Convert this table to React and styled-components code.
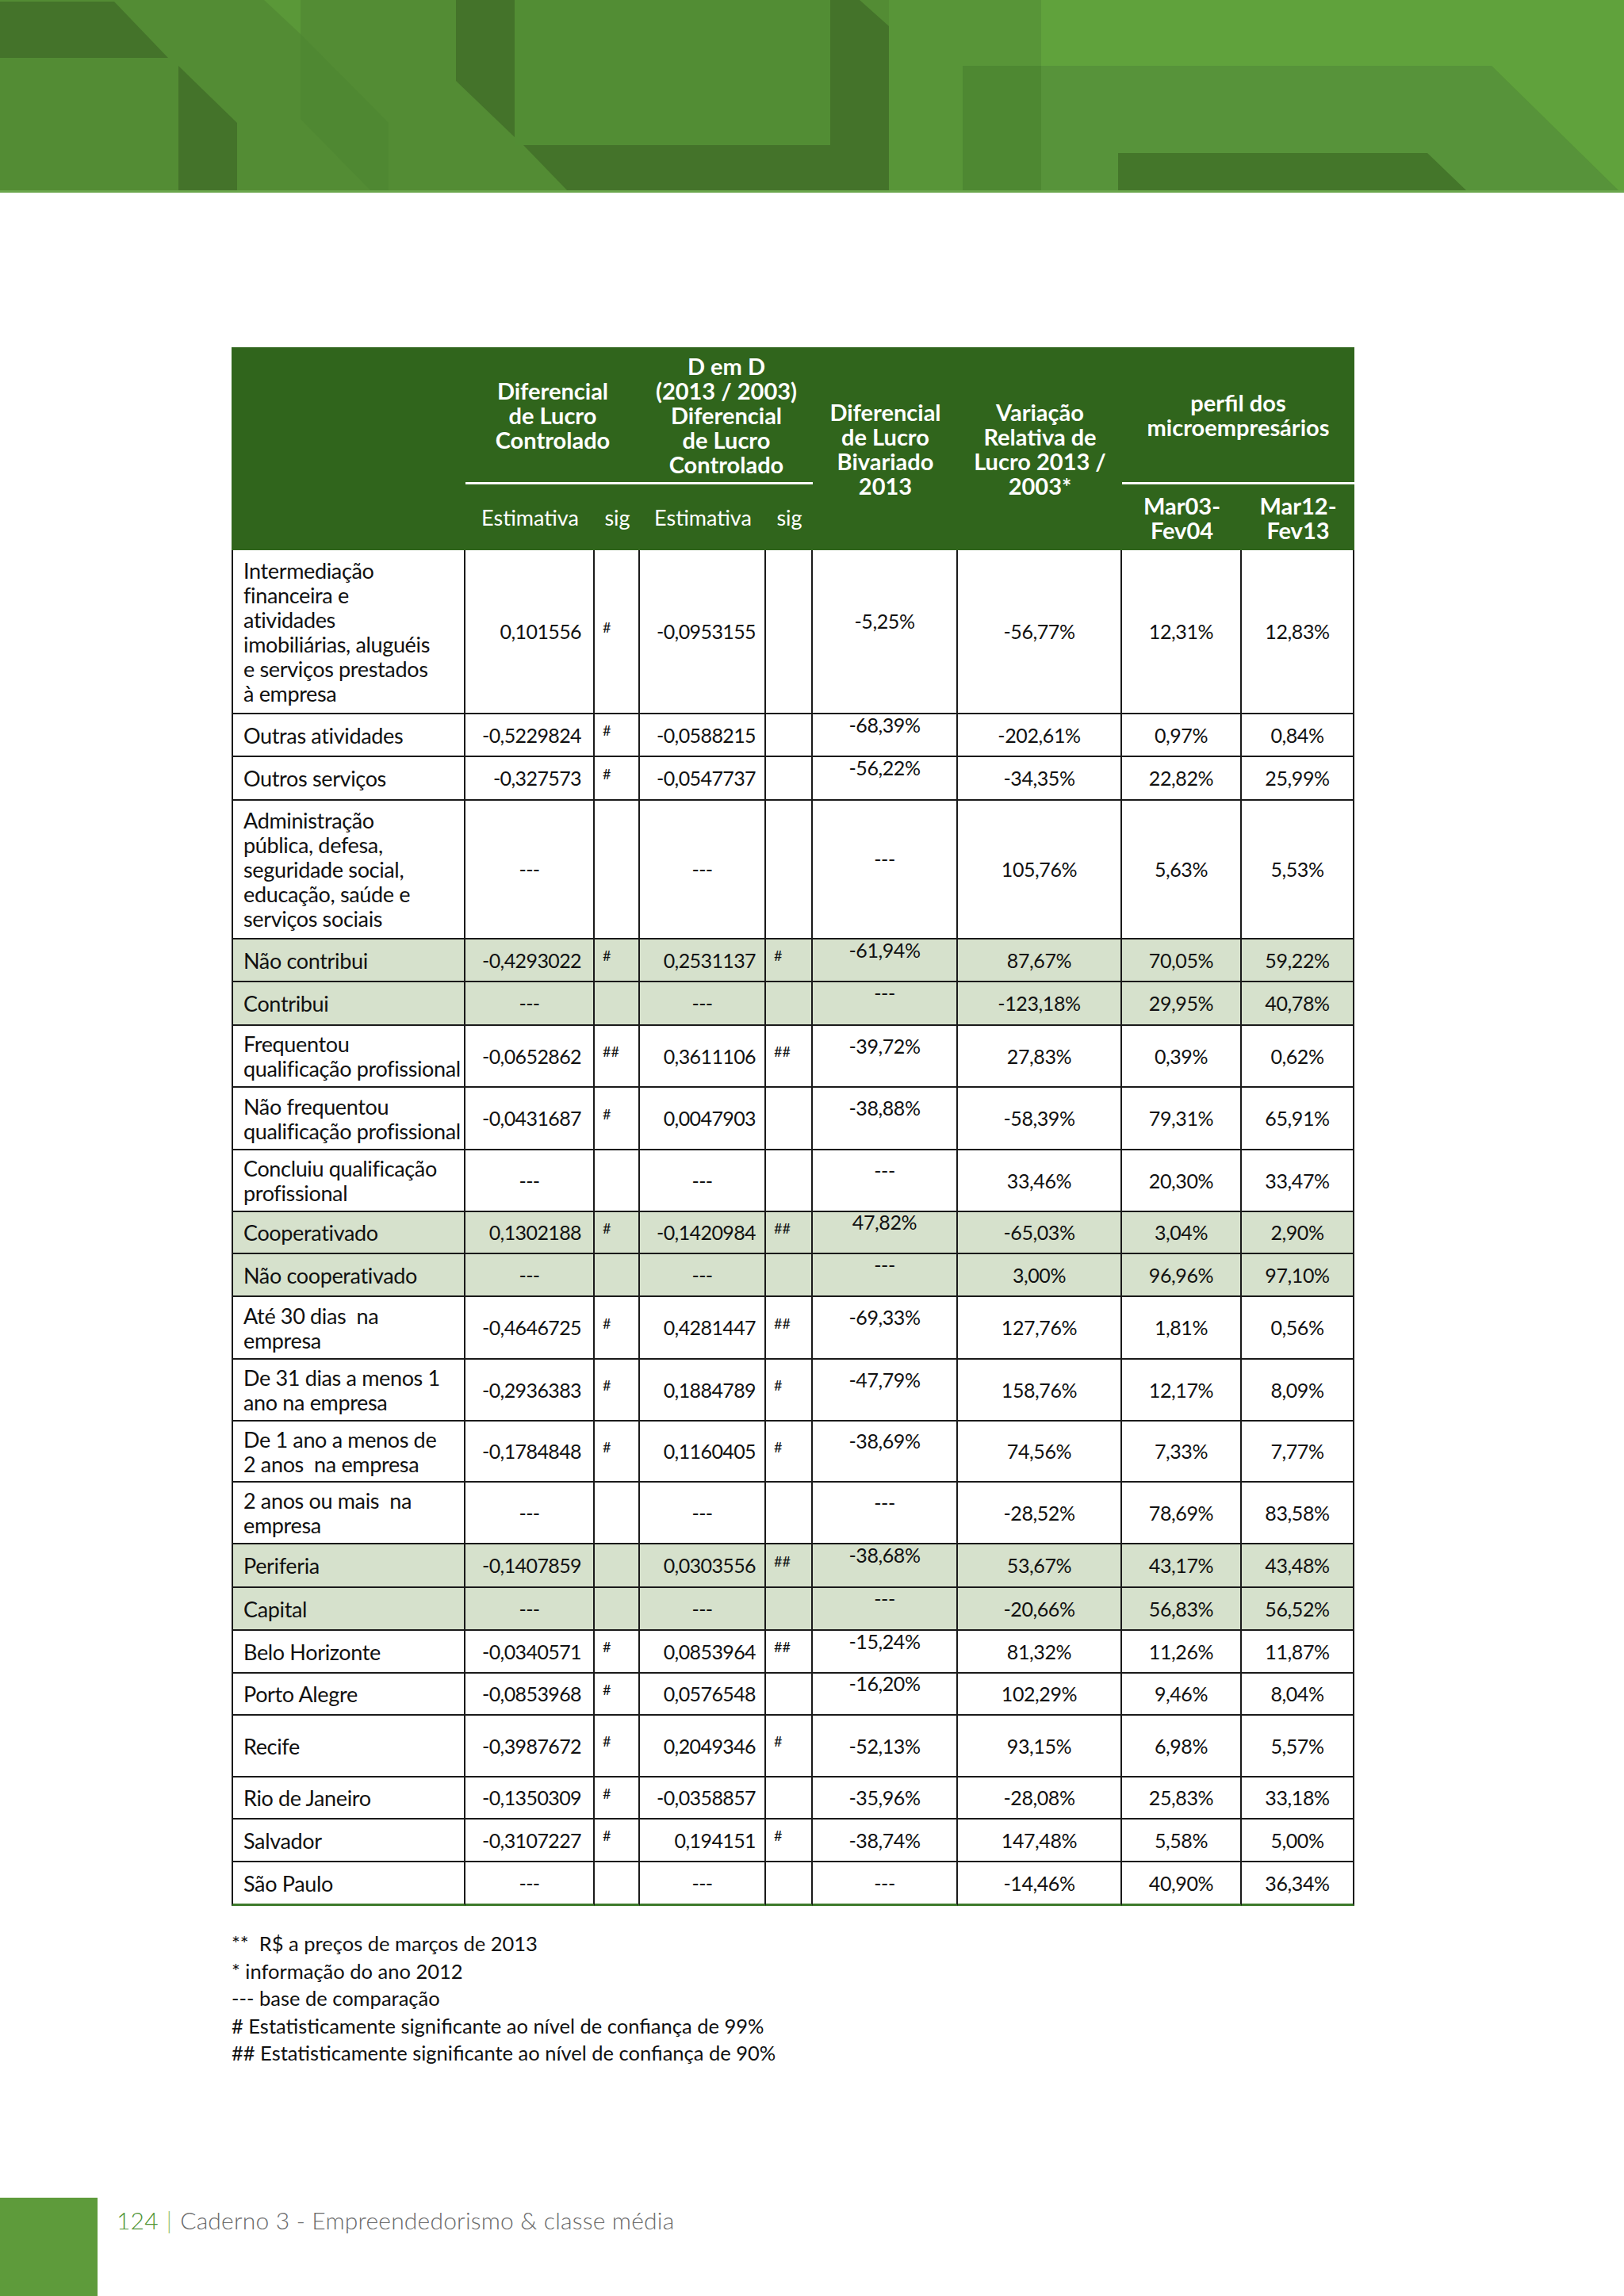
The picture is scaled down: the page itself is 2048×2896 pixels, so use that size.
import React from 'react';
import styled, {createGlobalStyle} from 'styled-components';

const GlobalStyle = createGlobalStyle`
  html, body {
    margin: 0;
    padding: 0;
    background: #ffffff;
  }
  body {
    font-family: Lato, "Open Sans", "DejaVu Sans", sans-serif;
    color: #111111;
  }
`;

const GREEN_DARK = '#30651c';
const SHADE = '#d6e1cc';

const Page = styled.div`
  width: 2048px;
  height: 2896px;
  display: flex;
  flex-direction: column;
  overflow: hidden;
`;

const Banner = styled.div`
  height: 243px;
  flex-shrink: 0;
  svg {
    display: block;
    width: 100%;
    height: 100%;
  }
`;

const Content = styled.div`
  padding: 195px 0 0 292px;
`;

const Table = styled.table`
  width: 1416px;
  table-layout: fixed;
  border-collapse: separate;
  border-spacing: 0;
  font-size: 27px;
  line-height: 31px;
`;

const HeadRow = styled.tr`
  height: ${p => p.$h}px;
`;

const HeadCell = styled.th`
  background: ${GREEN_DARK};
  color: #ffffff;
  font-weight: ${p => (p.$light ? 400 : 700)};
  font-size: ${p => (p.$light ? 27 : 29)}px;
  line-height: 31px;
  text-align: center;
  vertical-align: middle;
  padding: 0 4px;
  border-bottom: ${p => (p.$line ? '3px solid #ffffff' : 'none')};
  white-space: nowrap;
`;

const Row = styled.tr`
  height: ${p => p.$h}px;
  background: ${p => (p.$shade ? SHADE : '#ffffff')};
`;

const Cell = styled.td`
  border-right: 2px solid #1a1a1a;
  border-bottom: ${p => (p.$last ? '3px solid #3d7a2b' : '2px solid #1a1a1a')};
  vertical-align: middle;
  padding: 0;
  white-space: nowrap;
`;

const LabelCell = styled(Cell)`
  border-left: 2px solid #1a1a1a;
  padding: 0 0 0 13px;
  text-align: left;
  letter-spacing: -0.35px;
`;

const NumCell = styled(Cell)`
  font-size: 25px;
  letter-spacing: -0.6px;
  text-align: ${p => (p.$dash ? 'center' : 'right')};
  padding-right: ${p => (p.$dash ? 0 : p.$pr)}px;
`;

const SigCell = styled(Cell)`
  text-align: left;
  padding: 0 0 12px 10px;
  font-size: 18px;
  line-height: 18px;
`;

const CenterCell = styled(Cell)`
  font-size: 25px;
  letter-spacing: -0.4px;
  text-align: center;
`;

const Lifted = styled.span`
  display: inline-block;
  transform: translateY(${p => (p.$on ? -13 : 0)}px);
`;

const Notes = styled.div`
  margin-top: 30px;
  font-size: 25.5px;
  line-height: 34.6px;
`;

const Footer = styled.footer`
  margin-top: auto;
  height: 124px;
  display: flex;
  align-items: flex-start;
  gap: 24px;
`;

const FooterBlock = styled.div`
  width: 123px;
  height: 100%;
  background: #5e9b3b;
`;

const FooterText = styled.div`
  padding-top: 10px;
  font-family: Lato, "Open Sans", sans-serif;
  font-weight: 300;
  font-size: 30px;
  letter-spacing: 0.2px;
  color: #6a6a6a;
`;

const PageNum = styled.span`
  color: #4f9434;
`;

const Bar = styled.span`
  color: #8bbd6e;
  margin: 0 10px 0 10px;
`;

const rows = [
  ['Intermediação\nfinanceira e\natividades\nimobiliárias, aluguéis\ne serviços prestados\nà empresa', '0,101556', '#', '-0,0953155', '', '-5,25%', '-56,77%', '12,31%', '12,83%', 207, false, true],
  ['Outras atividades', '-0,5229824', '#', '-0,0588215', '', '-68,39%', '-202,61%', '0,97%', '0,84%', 54, false, true],
  ['Outros serviços', '-0,327573', '#', '-0,0547737', '', '-56,22%', '-34,35%', '22,82%', '25,99%', 55, false, true],
  ['Administração\npública, defesa,\nseguridade social,\neducação, saúde e\nserviços sociais', '---', '', '---', '', '---', '105,76%', '5,63%', '5,53%', 175, false, true],
  ['Não contribui', '-0,4293022', '#', '0,2531137', '#', '-61,94%', '87,67%', '70,05%', '59,22%', 54, true, true],
  ['Contribui', '---', '', '---', '', '---', '-123,18%', '29,95%', '40,78%', 55, true, true],
  ['Frequentou\nqualificação profissional', '-0,0652862', '##', '0,3611106', '##', '-39,72%', '27,83%', '0,39%', '0,62%', 78, false, true],
  ['Não frequentou\nqualificação profissional', '-0,0431687', '#', '0,0047903', '', '-38,88%', '-58,39%', '79,31%', '65,91%', 79, false, true],
  ['Concluiu qualificação\nprofissional', '---', '', '---', '', '---', '33,46%', '20,30%', '33,47%', 78, false, true],
  ['Cooperativado', '0,1302188', '#', '-0,1420984', '##', '47,82%', '-65,03%', '3,04%', '2,90%', 53, true, true],
  ['Não cooperativado', '---', '', '---', '', '---', '3,00%', '96,96%', '97,10%', 54, true, true],
  ['Até 30 dias  na\nempresa', '-0,4646725', '#', '0,4281447', '##', '-69,33%', '127,76%', '1,81%', '0,56%', 79, false, true],
  ['De 31 dias a menos 1\nano na empresa', '-0,2936383', '#', '0,1884789', '#', '-47,79%', '158,76%', '12,17%', '8,09%', 78, false, true],
  ['De 1 ano a menos de\n2 anos  na empresa', '-0,1784848', '#', '0,1160405', '#', '-38,69%', '74,56%', '7,33%', '7,77%', 77, false, true],
  ['2 anos ou mais  na\nempresa', '---', '', '---', '', '---', '-28,52%', '78,69%', '83,58%', 78, false, true],
  ['Periferia', '-0,1407859', '', '0,0303556', '##', '-38,68%', '53,67%', '43,17%', '43,48%', 55, true, true],
  ['Capital', '---', '', '---', '', '---', '-20,66%', '56,83%', '56,52%', 54, true, true],
  ['Belo Horizonte', '-0,0340571', '#', '0,0853964', '##', '-15,24%', '81,32%', '11,26%', '11,87%', 54, false, true],
  ['Porto Alegre', '-0,0853968', '#', '0,0576548', '', '-16,20%', '102,29%', '9,46%', '8,04%', 53, false, true],
  ['Recife', '-0,3987672', '#', '0,2049346', '#', '-52,13%', '93,15%', '6,98%', '5,57%', 78, false, false],
  ['Rio de Janeiro', '-0,1350309', '#', '-0,0358857', '', '-35,96%', '-28,08%', '25,83%', '33,18%', 53, false, false],
  ['Salvador', '-0,3107227', '#', '0,194151', '#', '-38,74%', '147,48%', '5,58%', '5,00%', 54, false, false],
  ['São Paulo', '---', '', '---', '', '---', '-14,46%', '40,90%', '36,34%', 55, false, false],
];

const colWidths = [295, 163, 57, 159, 59, 183, 207, 151, 142];

function Lines({text}) {
  const parts = text.split('\n');
  return parts.map((p, i) => (
    <React.Fragment key={i}>
      {p.replace(/  /g, '\u00a0 ')}
      {i < parts.length - 1 && <br />}
    </React.Fragment>
  ));
}

function BannerArt() {
  return (
    <svg viewBox="0 0 2048 243" preserveAspectRatio="none">
      <rect x="0" y="0" width="2048" height="243" fill="#538c34" />
      <polygon points="333,0 379,0 379,43 333,0" fill="#5a9838" />
      <polygon points="1121,0 1313,0 1313,243 1121,243" fill="#589538" />
      <polygon points="1214,83 1313,83 1313,243 1214,243" fill="#4e8832" />
      <polygon points="1313,83 1881,83 2044,243 1313,243" fill="#57933a" />
      <polygon points="1313,0 2048,0 2048,243 2044,243 1881,83 1313,83" fill="#60a23c" />
      <polygon points="0,2 144,2 212,73 0,73" fill="#44732a" />
      <polygon points="225,83 299,155 299,243 225,243" fill="#44732a" />
      <polygon points="379,43 490,155 490,243 470,243 379,150" fill="#4f8832" />
      <polygon points="575,0 649,0 649,173 575,102" fill="#44732a" />
      <polygon points="649,0 1047,0 1047,183 649,183" fill="#528d34" />
      <polygon points="1047,0 1084,0 1121,33 1121,243 718,243 660,183 1047,183" fill="#44732a" />
      <polygon points="1410,193 1800,193 1852,243 1410,243" fill="#44762a" />
      <rect x="0" y="240" width="2048" height="3" fill="#6aa64c" />
    </svg>
  );
}

export default function App() {
  return (
    <Page>
      <GlobalStyle />
      <Banner>
        <BannerArt />
      </Banner>
      <Content>
        <Table>
          <colgroup>
            {colWidths.map((w, i) => <col key={i} style={{width: w}} />)}
          </colgroup>
          <thead>
            <HeadRow $h={173}>
              <HeadCell rowSpan={2} />
              <HeadCell colSpan={2} $line>Diferencial<br />de Lucro<br />Controlado</HeadCell>
              <HeadCell colSpan={2} $line>D em D<br />(2013 / 2003)<br />Diferencial<br />de Lucro<br />Controlado</HeadCell>
              <HeadCell rowSpan={2}>Diferencial<br />de Lucro<br />Bivariado<br />2013</HeadCell>
              <HeadCell rowSpan={2}>Variação<br />Relativa de<br />Lucro 2013 /<br />2003*</HeadCell>
              <HeadCell colSpan={2} $line>perfil dos<br />microempresários</HeadCell>
            </HeadRow>
            <HeadRow $h={83}>
              <HeadCell $light>Estimativa</HeadCell>
              <HeadCell $light>sig</HeadCell>
              <HeadCell $light>Estimativa</HeadCell>
              <HeadCell $light>sig</HeadCell>
              <HeadCell>Mar03-<br />Fev04</HeadCell>
              <HeadCell>Mar12-<br />Fev13</HeadCell>
            </HeadRow>
          </thead>
          <tbody>
            {rows.map((r, i) => {
              const [label, e1, s1, e2, s2, biv, vr, p1, p2, h, shade, lift] = r;
              const last = i === rows.length - 1;
              return (
                <Row key={i} $h={h} $shade={shade}>
                  <LabelCell $last={last}><Lines text={label} /></LabelCell>
                  <NumCell $last={last} $dash={e1 === '---'} $pr={15}>{e1}</NumCell>
                  <SigCell $last={last}>{s1}</SigCell>
                  <NumCell $last={last} $dash={e2 === '---'} $pr={11}>{e2}</NumCell>
                  <SigCell $last={last}>{s2}</SigCell>
                  <CenterCell $last={last}><Lifted $on={lift}>{biv}</Lifted></CenterCell>
                  <CenterCell $last={last}>{vr}</CenterCell>
                  <CenterCell $last={last}>{p1}</CenterCell>
                  <CenterCell $last={last}>{p2}</CenterCell>
                </Row>
              );
            })}
          </tbody>
        </Table>
        <Notes>
          <div>**&nbsp; R$ a preços de marços de 2013</div>
          <div>* informação do ano 2012</div>
          <div>--- base de comparação</div>
          <div># Estatisticamente significante ao nível de confiança de 99%</div>
          <div>## Estatisticamente significante ao nível de confiança de 90%</div>
        </Notes>
      </Content>
      <Footer>
        <FooterBlock />
        <FooterText>
          <PageNum>124</PageNum><Bar>|</Bar>Caderno 3 - Empreendedorismo &amp; classe média
        </FooterText>
      </Footer>
    </Page>
  );
}
